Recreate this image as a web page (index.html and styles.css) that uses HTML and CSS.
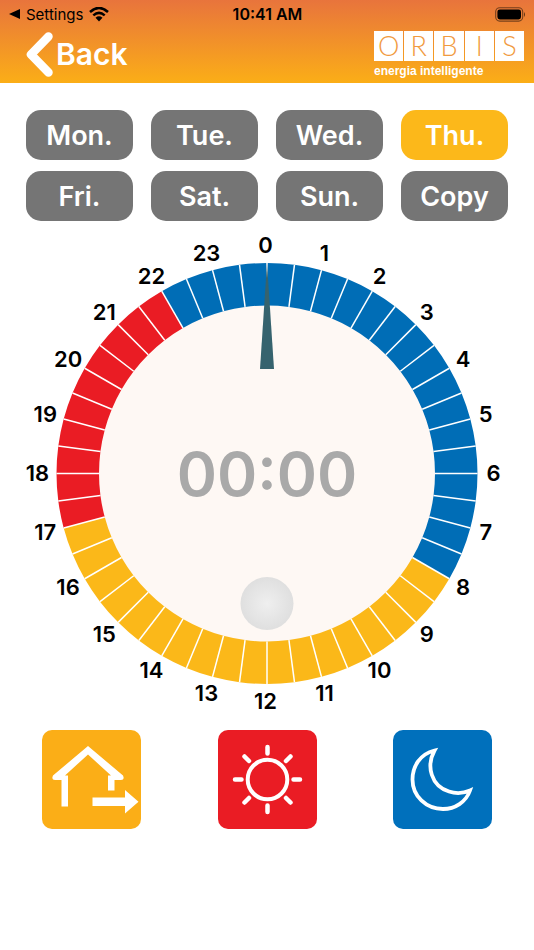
FILE: index.html
```html
<!DOCTYPE html>
<html lang="en">
<head>
    <meta charset="UTF-8">
    <meta name="viewport" content="width=device-width, initial-scale=1.0">
    <title>Orbis - Schedule</title>
    <link rel="stylesheet" href="styles.css">
</head>
<body>
    <header class="header">
        <div class="status-bar">
            <div class="status-left">
                <svg width="11" height="10" viewBox="0 0 11 10"><path d="M0 5 L11 0 V10 Z"/></svg>
                <span>Settings</span>
                <svg class="wifi" width="20" height="15" viewBox="0 0 20 15">
                    <path d="M1 5 Q10 -3 19 5" fill="none" stroke="#000" stroke-width="2.6"/>
                    <path d="M4.300 8.400 Q10 3.400 15.700 8.400" fill="none" stroke="#000" stroke-width="2.500"/>
                    <path d="M6.500 10.700 Q10 8 13.500 10.700 L10 14.500 Z"/>
                </svg>
            </div>
            <span class="status-time">10:41 AM</span>
            <svg class="battery" width="31" height="15" viewBox="0 0 31 15">
                <rect x="0.700" y="0.700" width="27" height="13.400" rx="4" fill="none" stroke="#000" stroke-opacity="0.5" stroke-width="1.100"/>
                <rect x="2.400" y="2.400" width="23.600" height="10" rx="2.400"/>
                <path d="M29 5 Q31 7.500 29 10 Z" fill-opacity="0.6"/>
            </svg>
        </div>
        <div class="nav">
            <button class="back-btn">
                <svg width="28" height="46" viewBox="0 0 28 46"><path d="M23.500 5.500 L6 23.500 L23.500 41.500" fill="none" stroke="#fff" stroke-width="8.500" stroke-linecap="round" stroke-linejoin="round"/></svg>
                <span>Back</span>
            </button>
            <div class="brand">
                <div class="brand-name"><span>O</span><span>R</span><span>B</span><span>I</span><span>S</span></div>
                <div class="brand-tagline">energia intelligente</div>
            </div>
        </div>
    </header>

    <main>
        <div class="days">
            <button>Mon.</button>
            <button>Tue.</button>
            <button>Wed.</button>
            <button class="active">Thu.</button>
            <button>Fri.</button>
            <button>Sat.</button>
            <button>Sun.</button>
            <button>Copy</button>
        </div>

        <svg class="dial" viewBox="0 0 534 486">
            <defs>
                <radialGradient id="knob">
                    <stop offset="0" stop-color="#efefef"/>
                    <stop offset="1" stop-color="#dfdfdf"/>
                </radialGradient>
            </defs>
            <circle cx="267" cy="243.500" r="168.500" fill="#fef8f4"/>
            <g id="segments"></g>
            <g id="hours" class="hours"></g>
            <path d="M267 33 L274 139 H260 Z" fill="#36636e"/>
            <text class="dial-time" x="267" y="266">00:00</text>
            <circle cx="267" cy="373.500" r="26.500" fill="url(#knob)"/>
        </svg>

        <div class="modes">
            <button class="mode away" aria-label="Away">
                <svg viewBox="0 0 99 99" fill="#fff">
                    <path d="M46 16 L81 45.500 Q83 50 79 50 H72.500 V60.500 H66 V45.500 H69 L46 24.500 L23 45.500 H26 V76.500 H19.500 V50 H13 Q9 50 11 45.500 Z"/>
                    <path d="M50.500 67.500 H83 V60 L96.500 71.700 L83 83.500 V76 H50.500 Z"/>
                </svg>
            </button>
            <button class="mode sun" aria-label="Comfort">
                <svg viewBox="0 0 99 99" fill="none" stroke="#fff" stroke-width="4.500" stroke-linecap="round">
                    <circle cx="49.500" cy="49.500" r="19.800" stroke-width="4"/>
                    <path d="M49.500 17 V23.500 M49.500 75.500 V82 M17 49.500 H23.500 M75.500 49.500 H82"/>
                    <path d="M26.500 26.500 L31 31 M72.500 72.500 L68 68 M72.500 26.500 L68 31 M26.500 72.500 L31 68"/>
                </svg>
            </button>
            <button class="mode moon" aria-label="Night">
                <svg viewBox="0 0 99 99" fill="none" stroke="#fff" stroke-width="3.800" stroke-linejoin="miter">
                    <path d="M41.500 20.500 C27 24 19.500 36.500 19.500 49.500 C19.500 66 33 79 50 79 C62 79 73 72 77 60.500 C70 63.500 62 63.500 56 61.500 C38 56 33 36 41.500 20.500 Z"/>
                </svg>
            </button>
        </div>
    </main>
    <script src="script.js"></script>
</body>
</html>
```
FILE: styles.css
```css
* {
    box-sizing: border-box;
}

body {
    font-family: Inter, 'Liberation Sans', sans-serif;
    margin: 0;
    background: #fff;
    color: #000;
}

button {
    font-family: inherit;
    border: none;
    padding: 0;
    color: #fff;
    cursor: pointer;
}

svg {
    display: block;
}

.header {
    background: linear-gradient(#e8743c, #fbae17);
    height: 83px;
}

.status-bar {
    display: grid;
    grid-template-columns: 1fr auto 1fr;
    align-items: center;
    height: 28px;
    padding: 0 8px 0 9px;
    font-size: 15px;
}

.status-left {
    display: flex;
    align-items: center;
    gap: 6px;
}

.status-time {
    font-size: 16px;
    font-weight: 600;
}

.battery {
    justify-self: end;
}

.nav {
    display: flex;
    justify-content: space-between;
    align-items: flex-start;
    padding: 3px 10px 0 25px;
}

.back-btn {
    display: flex;
    align-items: center;
    gap: 3px;
    background: none;
    font-size: 30px;
    font-weight: 600;
}

.brand {
    width: 150px;
    color: #fff;
}

.brand-name {
    display: grid;
    grid-template-columns: repeat(5, 1fr);
    gap: 1px;
}

.brand-name span {
    height: 30px;
    background: #fff;
    color: #f19a3e;
    font-family: Lato, sans-serif;
    font-size: 27px;
    font-weight: 300;
    line-height: 30px;
    text-align: center;
}

.brand-tagline {
    font-family: 'Liberation Sans', sans-serif;
    font-size: 12px;
    font-weight: 700;
    line-height: 20px;
}

.days {
    display: grid;
    grid-template-columns: repeat(4, 1fr);
    gap: 11px 18px;
    padding: 27px 26px 9px;
}

.days button {
    height: 50px;
    border-radius: 15px;
    background: #757575;
    font-size: 27px;
    font-weight: 600;
}

.days button.active {
    background: #fcb81a;
}

.dial {
    width: 100%;
}

.hours {
    font-size: 22px;
    font-weight: 600;
    text-anchor: middle;
}

.dial-time {
    font-size: 61px;
    font-weight: 600;
    fill: #a9a9a9;
    text-anchor: middle;
}

.modes {
    display: flex;
    justify-content: space-between;
    padding: 14px 42px;
}

.mode {
    width: 99px;
    height: 99px;
    border-radius: 10px;
}

.away {
    background: #fbae17;
}

.sun {
    background: #ea1c24;
}

.moon {
    background: #0070bc;
}
```
FILE: script.js
```js
const cx = 267;
const cy = 243.5;
const outer = 210.5;
const inner = 168;

// one segment per half hour
function segmentColor(i) {
    if (i >= 16 && i < 34) return "#fbb819";
    if (i >= 34 && i < 44) return "#ea1c24";
    return "#006db6";
}

function point(r, i) {
    const a = i * Math.PI / 24;
    return (cx + r * Math.sin(a)) + " " + (cy - r * Math.cos(a));
}

let segments = "";
let lines = "";
for (let i = 0; i < 48; i++) {
    segments += `<path fill="${segmentColor(i)}" d="M${point(inner, i)} L${point(outer, i)} A${outer} ${outer} 0 0 1 ${point(outer, i + 1)} L${point(inner, i + 1)} A${inner} ${inner} 0 0 0 ${point(inner, i)} Z"/>`;
    lines += `<path stroke="#fff" stroke-width="1.5" d="M${point(inner, i)} L${point(outer, i)}"/>`;
}
document.getElementById("segments").innerHTML = segments + lines;

let hours = "";
for (let h = 0; h < 24; h++) {
    const a = h * Math.PI / 12;
    const x = 265.5 + 228 * Math.sin(a);
    const y = 251 - 228 * Math.cos(a);
    hours += `<text x="${x}" y="${y}">${h}</text>`;
}
document.getElementById("hours").innerHTML = hours;
```
